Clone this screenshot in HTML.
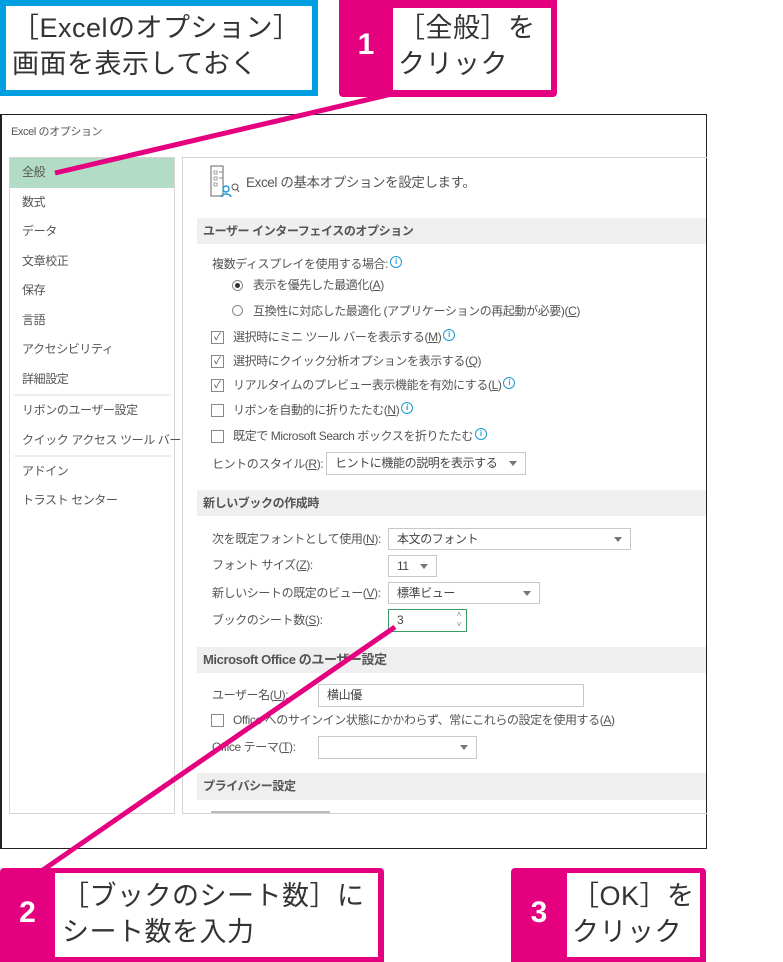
<!DOCTYPE html>
<html><head><meta charset="utf-8"><style>
*{margin:0;padding:0;box-sizing:border-box}
body{width:783px;height:962px;background:#fff;position:relative;overflow:hidden;font-family:"Liberation Sans","Noto Sans CJK JP",sans-serif;color:#555}
.a{position:absolute;white-space:nowrap}
.t{font-size:12px;color:#555;line-height:16px;letter-spacing:-0.4px}
.nav{font-size:12px;color:#555;left:22px;line-height:16px;letter-spacing:-0.4px}
.bar{position:absolute;left:197px;width:509px;background:#efefef;font-size:12px;font-weight:bold;color:#555;padding-left:6px;letter-spacing:-0.4px}
.sel{position:absolute;border:1px solid #c8c8c8;background:#fff;font-size:12px;color:#444;padding-left:8px;line-height:20px;letter-spacing:-0.4px}
.sel .dd{position:absolute;right:8px;top:8px;border-left:4px solid transparent;border-right:4px solid transparent;border-top:5px solid #777}
.cb{position:absolute;width:13px;height:13px;border:1px solid #888;background:#fff;font-size:10px;line-height:11px;text-align:center;color:#444}
.i{display:inline-block;width:12px;height:12px;border:1.5px solid #1a9ad6;border-radius:50%;font-size:8px;line-height:9px;text-align:center;color:#1a9ad6;font-weight:bold;vertical-align:top;margin-left:2px;letter-spacing:0}
.big{font-size:27px;color:#333;line-height:36px;letter-spacing:0.5px}
.num{position:absolute;color:#fff;font-size:30px;font-weight:bold;text-align:center}
</style></head><body>
<div class="a" style="left:0;top:114px;width:707px;height:735px;border:1.5px solid #222;border-left:2px solid #222;background:#fff"></div>
<div class="a t" style="left:11px;top:124px;font-size:11px">Excel のオプション</div>
<div class="a" style="left:9px;top:157px;width:166px;height:657px;border:1px solid #d4d4d4"></div>
<div class="a" style="left:10px;top:158px;width:164px;height:30px;background:#b2dcc5"></div>
<div class="a nav" style="top:164px">全般</div>
<div class="a nav" style="top:194px">数式</div>
<div class="a nav" style="top:223px">データ</div>
<div class="a nav" style="top:253px">文章校正</div>
<div class="a nav" style="top:282px">保存</div>
<div class="a nav" style="top:312px">言語</div>
<div class="a nav" style="top:341px">アクセシビリティ</div>
<div class="a nav" style="top:371px">詳細設定</div>
<div class="a" style="left:14px;top:394px;width:157px;height:2px;background:#eee"></div>
<div class="a nav" style="top:402px">リボンのユーザー設定</div>
<div class="a nav" style="top:432px">クイック アクセス ツール バー</div>
<div class="a" style="left:14px;top:455px;width:157px;height:2px;background:#eee"></div>
<div class="a nav" style="top:463px">アドイン</div>
<div class="a nav" style="top:492px">トラスト センター</div>

<div class="a" style="left:182px;top:157px;width:525px;height:657px;border:1px solid #d4d4d4;border-right:none"></div>
<svg class="a" style="left:208px;top:165px" width="36" height="34" viewBox="0 0 36 34"><path d="M3 1h12v30H3z" fill="none" stroke="#666" stroke-width="1"/><path d="M6 6h3v3H6zM6 12h3v3H6zM6 18h3v3H6z" fill="none" stroke="#888" stroke-width=".8"/><path d="M11 7h4M11 13h4" stroke="#888"/><circle cx="18" cy="24" r="3" fill="none" stroke="#1a9ad6" stroke-width="1.5"/><path d="M13 32c1-4 9-4 10 0" fill="none" stroke="#1a9ad6" stroke-width="1.5"/><circle cx="27" cy="22" r="3" fill="none" stroke="#555"/><path d="M29 24l2 3" stroke="#555"/></svg>
<div class="a t" style="left:246px;top:175px;font-size:13.5px">Excel の基本オプションを設定します。</div>

<div class="bar" style="top:218px;height:26px;line-height:26px">ユーザー インターフェイスのオプション</div>
<div class="a t" style="left:212px;top:256px">複数ディスプレイを使用する場合:<span class="i">i</span></div>
<div class="a" style="left:232px;top:280px;width:11px;height:11px;border:1px solid #888;border-radius:50%"><div style="margin:2px;width:5px;height:5px;border-radius:50%;background:#333"></div></div>
<div class="a t" style="left:253px;top:277px">表示を優先した最適化(<u>A</u>)</div>
<div class="a" style="left:232px;top:305px;width:11px;height:11px;border:1px solid #888;border-radius:50%"></div>
<div class="a t" style="left:253px;top:303px">互換性に対応した最適化 (アプリケーションの再起動が必要)(<u>C</u>)</div>
<div class="cb" style="left:211px;top:331px">✓</div><div class="a t" style="left:233px;top:329px">選択時にミニ ツール バーを表示する(<u>M</u>)<span class="i">i</span></div>
<div class="cb" style="left:211px;top:355px">✓</div><div class="a t" style="left:233px;top:353px">選択時にクイック分析オプションを表示する(<u>Q</u>)</div>
<div class="cb" style="left:211px;top:379px">✓</div><div class="a t" style="left:233px;top:377px">リアルタイムのプレビュー表示機能を有効にする(<u>L</u>)<span class="i">i</span></div>
<div class="cb" style="left:211px;top:404px"></div><div class="a t" style="left:233px;top:402px">リボンを自動的に折りたたむ(<u>N</u>)<span class="i">i</span></div>
<div class="cb" style="left:211px;top:430px"></div><div class="a t" style="left:233px;top:428px">既定で Microsoft Search ボックスを折りたたむ<span class="i">i</span></div>
<div class="a t" style="left:212px;top:456px">ヒントのスタイル(<u>R</u>):</div>
<div class="sel" style="left:326px;top:452px;width:200px;height:23px">ヒントに機能の説明を表示する<span class="dd"></span></div>

<div class="bar" style="top:490px;height:26px;line-height:26px">新しいブックの作成時</div>
<div class="a t" style="left:212px;top:531px">次を既定フォントとして使用(<u>N</u>):</div>
<div class="sel" style="left:388px;top:528px;width:243px;height:22px">本文のフォント<span class="dd"></span></div>
<div class="a t" style="left:212px;top:557px">フォント サイズ(<u>Z</u>):</div>
<div class="sel" style="left:388px;top:555px;width:49px;height:22px">11<span class="dd"></span></div>
<div class="a t" style="left:212px;top:585px">新しいシートの既定のビュー(<u>V</u>):</div>
<div class="sel" style="left:388px;top:582px;width:152px;height:22px">標準ビュー<span class="dd"></span></div>
<div class="a t" style="left:212px;top:612px">ブックのシート数(<u>S</u>):</div>
<div class="sel" style="left:388px;top:609px;width:79px;height:23px;border-color:#3a9a6a">3<span class="a" style="right:5px;top:0;font-size:8px;line-height:10px;color:#888">˄<br>˅</span></div>

<div class="bar" style="top:647px;height:26px;line-height:26px;font-size:13px">Microsoft Office のユーザー設定</div>
<div class="a t" style="left:212px;top:687px">ユーザー名(<u>U</u>):</div>
<div class="sel" style="left:318px;top:684px;width:266px;height:23px">横山優</div>
<div class="cb" style="left:211px;top:714px"></div><div class="a t" style="left:233px;top:712px">Office へのサインイン状態にかかわらず、常にこれらの設定を使用する(<u>A</u>)</div>
<div class="a t" style="left:212px;top:739px">Office テーマ(<u>T</u>):</div>
<div class="sel" style="left:318px;top:736px;width:159px;height:23px"><span class="dd"></span></div>

<div class="bar" style="top:773px;height:27px;line-height:27px">プライバシー設定</div>
<div class="a" style="left:211px;top:811px;width:119px;height:2px;background:#bbb"></div>

<svg class="a" style="left:0;top:0" width="783" height="962"><path d="M392 94L55 173" stroke="#e4007f" stroke-width="5"/><path d="M395 627L40 872" stroke="#e4007f" stroke-width="5"/></svg>

<div class="a" style="left:0;top:0;width:318px;height:96px;border:6px solid #00a0e0;background:#fff"></div>
<div class="a big" style="left:12px;top:10px">［Excelのオプション］<br>画面を表示しておく</div>

<div class="a" style="left:339px;top:0;width:218px;height:97px;background:#e4007f;border-radius:0 0 4px 4px"></div>
<div class="a" style="left:393px;top:8px;width:158px;height:82px;background:#fff"></div>
<div class="num" style="left:339px;top:28px;width:54px">1</div>
<div class="a big" style="left:398px;top:10px">［全般］を<br>クリック</div>

<div class="a" style="left:0;top:868px;width:384px;height:94px;background:#e4007f;border-radius:4px 4px 0 0"></div>
<div class="a" style="left:55px;top:873px;width:323px;height:84px;background:#fff"></div>
<div class="num" style="left:0;top:896px;width:55px">2</div>
<div class="a big" style="left:62px;top:878px">［ブックのシート数］に<br>シート数を入力</div>

<div class="a" style="left:511px;top:868px;width:195px;height:94px;background:#e4007f;border-radius:4px 4px 0 0"></div>
<div class="a" style="left:567px;top:873px;width:133px;height:84px;background:#fff"></div>
<div class="num" style="left:511px;top:896px;width:56px">3</div>
<div class="a big" style="left:572px;top:878px">［OK］を<br>クリック</div>
</body></html>
